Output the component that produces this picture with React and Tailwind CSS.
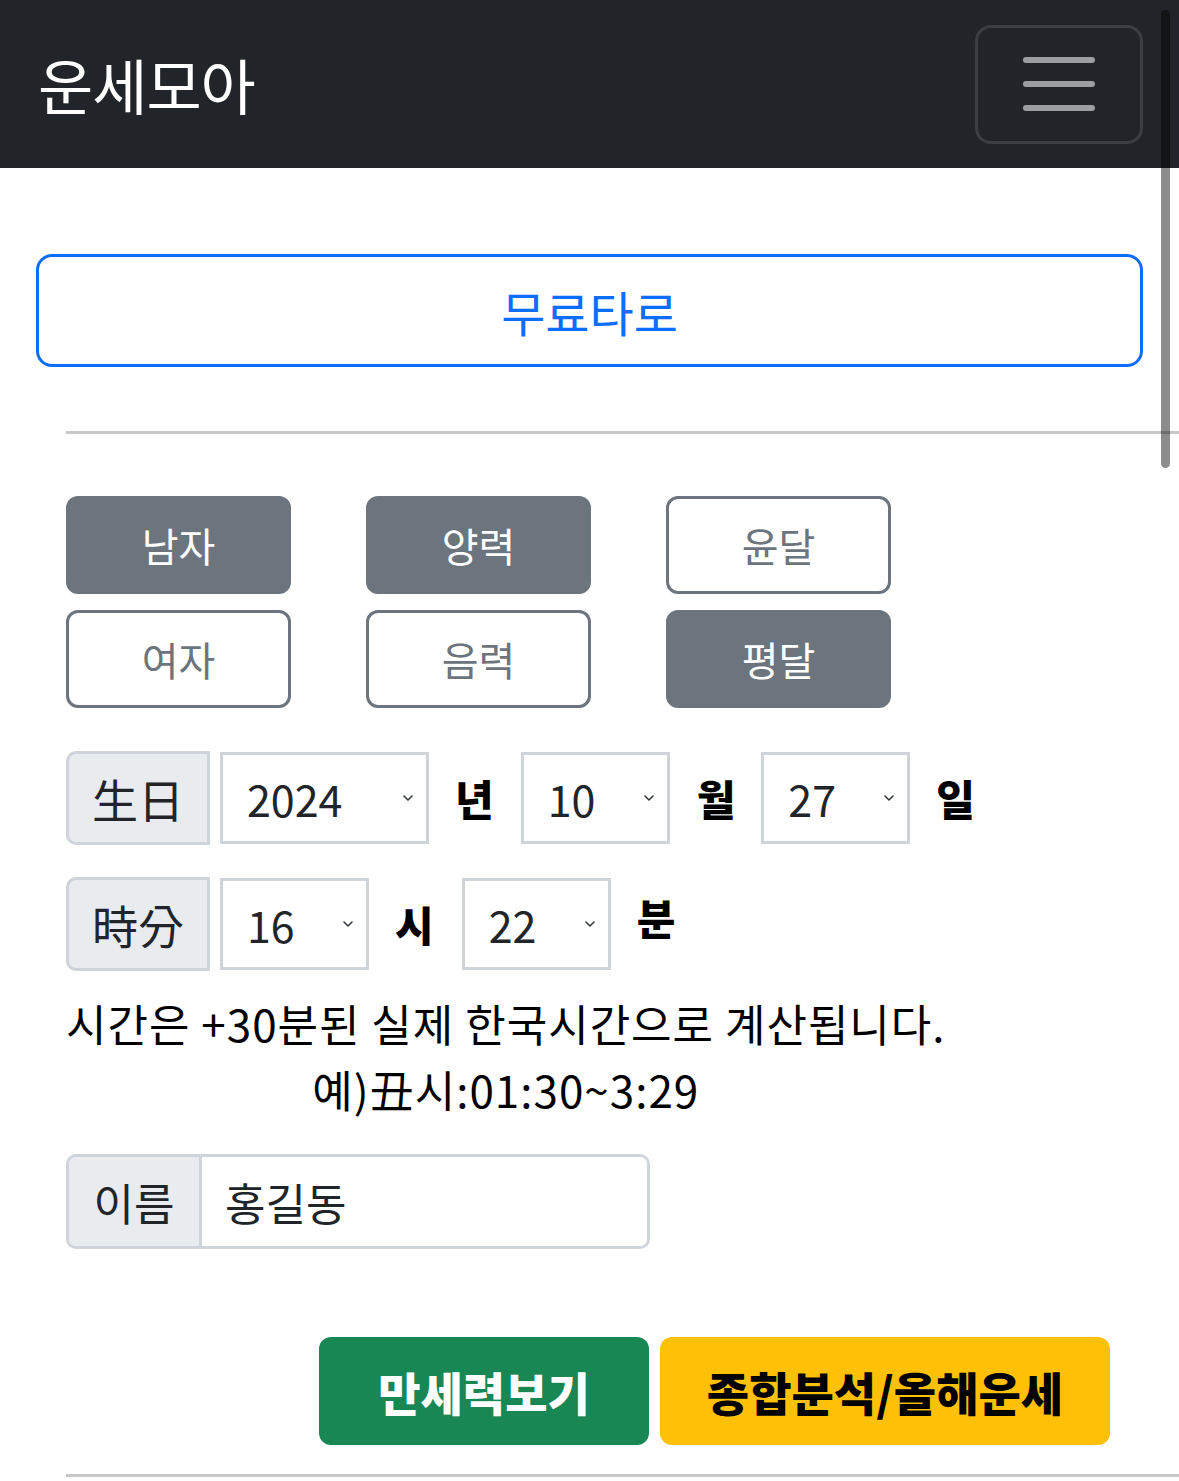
import { useState } from 'react'

const FONT = { fontFamily: '"Noto Sans CJK KR", "Noto Sans", sans-serif' }

const Chevron = () => (
  <svg width="12" height="8" viewBox="0 0 12 8" fill="none" className="shrink-0">
    <path d="M2 2l4 4 4-4" stroke="#343a40" strokeWidth="1.6" strokeLinecap="round" strokeLinejoin="round" />
  </svg>
)

const FakeSelect = ({ value, width }) => (
  <div
    className={`flex items-center justify-between h-[92px] border-[3px] border-[#ced4da] bg-white pl-[24px] pr-[12px] text-[43px] text-[#212529] ${width}`}
  >
    <span>{value}</span>
    <Chevron />
  </div>
)

const Unit = ({ children, className = '' }) => (
  <span className={`text-[42px] font-black text-black leading-none ${className}`}>{children}</span>
)

const ToggleBtn = ({ label, active, onClick }) => (
  <button
    onClick={onClick}
    className={
      active
        ? 'h-[98px] w-[225px] rounded-[12px] border-[3px] border-[#6c757d] bg-[#6c757d] text-[40px] text-white'
        : 'h-[98px] w-[225px] rounded-[12px] border-[3px] border-[#6c757d] bg-white text-[40px] text-[#6c757d]'
    }
  >
    {label}
  </button>
)

export default function App() {
  const [gender, setGender] = useState('m')
  const [calendar, setCalendar] = useState('solar')
  const [leap, setLeap] = useState(false)
  const [name, setName] = useState('홍길동')

  return (
    <div className="relative min-h-[1481px] bg-white overflow-hidden" style={FONT}>
      {/* 상단 네비게이션 */}
      <nav className="h-[168px] bg-[#212529] flex items-center justify-between pl-[38px] pr-[36px]">
        <span className="text-[60px] text-white leading-none tracking-[-1px]">운세모아</span>
        <button className="w-[168px] h-[119px] rounded-[16px] border-[3px] border-[#3b3e42] flex flex-col items-center justify-center gap-[18px]">
          <span className="block w-[72px] h-[6px] rounded-full bg-[#9d9e9f]" />
          <span className="block w-[72px] h-[6px] rounded-full bg-[#9d9e9f]" />
          <span className="block w-[72px] h-[6px] rounded-full bg-[#9d9e9f]" />
        </button>
      </nav>

      <div className="px-[36px] pt-[86px]">
        <button className="w-full h-[113px] rounded-[16px] border-[3px] border-[#0d6efd] text-[48px] text-[#0d6efd]">
          무료타로
        </button>
      </div>

      <div className="pl-[66px] pt-[64px]">
        <div className="h-[3px] bg-[#c8c8c8]" />

        {/* 성별 / 양음력 / 윤달 */}
        <div className="mt-[62px] grid grid-cols-[225px_225px_225px] gap-x-[75px] gap-y-[16px]">
          <ToggleBtn label="남자" active={gender === 'm'} onClick={() => setGender('m')} />
          <ToggleBtn label="양력" active={calendar === 'solar'} onClick={() => setCalendar('solar')} />
          <ToggleBtn label="윤달" active={leap} onClick={() => setLeap(true)} />
          <ToggleBtn label="여자" active={gender === 'f'} onClick={() => setGender('f')} />
          <ToggleBtn label="음력" active={calendar === 'lunar'} onClick={() => setCalendar('lunar')} />
          <ToggleBtn label="평달" active={!leap} onClick={() => setLeap(false)} />
        </div>

        {/* 생일 */}
        <div className="mt-[43px] flex items-center">
          <div className="w-[144px] h-[94px] flex items-center justify-center rounded-l-[10px] border-[3px] border-[#ced4da] bg-[#e9ecef] text-[46px] text-[#212529]">
            生日
          </div>
          <div className="ml-[10px]">
            <FakeSelect value="2024" width="w-[209px]" />
          </div>
          <Unit className="ml-[26px]">년</Unit>
          <div className="ml-[27px]">
            <FakeSelect value="10" width="w-[149px]" />
          </div>
          <Unit className="ml-[27px]">월</Unit>
          <div className="ml-[26px]">
            <FakeSelect value="27" width="w-[149px]" />
          </div>
          <Unit className="ml-[26px]">일</Unit>
        </div>

        {/* 시분 */}
        <div className="mt-[32px] flex items-center">
          <div className="w-[144px] h-[94px] flex items-center justify-center rounded-l-[10px] border-[3px] border-[#ced4da] bg-[#e9ecef] text-[46px] text-[#212529]">
            時分
          </div>
          <div className="ml-[10px]">
            <FakeSelect value="16" width="w-[149px]" />
          </div>
          <Unit className="ml-[26px]">시</Unit>
          <div className="ml-[28px]">
            <FakeSelect value="22" width="w-[149px]" />
          </div>
          <Unit className="ml-[26px] -mt-[14px]">분</Unit>
        </div>

        {/* 안내 문구 */}
        <div className="mt-[19px] inline-block text-center text-[44px] leading-[66px] text-black tracking-[1px]">
          시간은 +30분된 실제 한국시간으로 계산됩니다.
          <br />
          예)丑시:01:30~3:29
        </div>

        {/* 이름 */}
        <div className="mt-[32px] flex w-[584px] h-[95px] rounded-[10px] border-[3px] border-[#ced4da] overflow-hidden">
          <div className="w-[133px] flex items-center justify-center bg-[#e9ecef] border-r-[3px] border-[#ced4da] text-[44px] text-[#212529]">
            이름
          </div>
          <input
            value={name}
            onChange={(e) => setName(e.target.value)}
            className="flex-1 min-w-0 pl-[23px] text-[44px] text-[#212529] outline-none bg-white"
            style={FONT}
          />
        </div>

        {/* 하단 버튼 */}
        <div className="mt-[88px] flex gap-[11px] pl-[253px]">
          <button className="w-[330px] h-[108px] rounded-[12px] bg-[#198754] text-[46px] font-black text-white">
            만세력보기
          </button>
          <button className="w-[450px] h-[108px] rounded-[12px] bg-[#ffc107] text-[46px] font-black text-black">
            종합분석/올해운세
          </button>
        </div>

        <div className="mt-[29px] h-[3px] bg-[#c8c8c8]" />
      </div>

      {/* 스크롤바 */}
      <div className="absolute left-[1161px] top-[10px] w-[9px] h-[458px] rounded-full bg-black/45" />
    </div>
  )
}
